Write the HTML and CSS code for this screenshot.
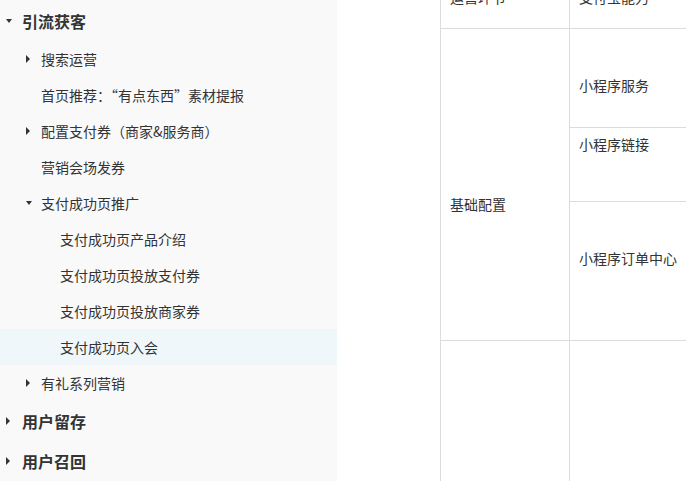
FILE: index.html
```html
<!DOCTYPE html>
<html lang="zh-CN">

<head>
    <meta charset="UTF-8">
    <meta name="viewport" content="width=device-width, initial-scale=1.0">
    <title>支付成功页入会</title>
    <link rel="stylesheet" href="styles.css">
</head>

<body>

    <div class="layout">
        <nav class="sidebar">
            <ul class="tree">
                <li>
                    <div class="row lvl1"><span class="caret down"></span><span>引流获客</span></div>
                    <ul>
                        <li><div class="row lvl2"><span class="caret right"></span><span>搜索运营</span></div></li>
                        <li><div class="row lvl2"><span class="caret"></span><span>首页推荐：“有点东西”素材提报</span></div></li>
                        <li><div class="row lvl2"><span class="caret right"></span><span>配置支付券（商家&amp;服务商）</span></div></li>
                        <li><div class="row lvl2"><span class="caret"></span><span>营销会场发券</span></div></li>
                        <li>
                            <div class="row lvl2"><span class="caret down"></span><span>支付成功页推广</span></div>
                            <ul>
                                <li><div class="row lvl3">支付成功页产品介绍</div></li>
                                <li><div class="row lvl3">支付成功页投放支付券</div></li>
                                <li><div class="row lvl3">支付成功页投放商家券</div></li>
                                <li><div class="row lvl3 active">支付成功页入会</div></li>
                            </ul>
                        </li>
                        <li><div class="row lvl2"><span class="caret right"></span><span>有礼系列营销</span></div></li>
                    </ul>
                </li>
                <li><div class="row lvl1"><span class="caret right"></span><span>用户留存</span></div></li>
                <li><div class="row lvl1"><span class="caret right"></span><span>用户召回</span></div></li>
            </ul>
        </nav>

        <main class="content">
            <table class="ability">
                <colgroup>
                    <col class="col-step">
                    <col class="col-ability">
                </colgroup>
                <thead>
                    <tr class="head-row">
                        <th>运营环节</th>
                        <th>支付宝能力</th>
                    </tr>
                </thead>
                <tbody>
                    <tr class="r1">
                        <td rowspan="3" class="step">基础配置</td>
                        <td class="pad-mid">小程序服务</td>
                    </tr>
                    <tr class="r2">
                        <td class="pad-top">小程序链接</td>
                    </tr>
                    <tr class="r3">
                        <td class="pad-mid">小程序订单中心</td>
                    </tr>
                    <tr class="r4">
                        <td></td>
                        <td></td>
                    </tr>
                </tbody>
            </table>
        </main>
    </div>

</body>

</html>
```

FILE: styles.css
```css
* {
    margin: 0;
    padding: 0;
    box-sizing: border-box;
}

body {
    font-family: "Noto Sans CJK SC", "Noto Sans", sans-serif;
    color: #333;
    background: #fff;
    overflow: hidden;
}

.layout {
    display: flex;
    height: 481px;
}

/* sidebar */

.sidebar {
    width: 337px;
    flex-shrink: 0;
    background: #f9f9fa;
    overflow: hidden;
    padding-top: 1px;
}

.tree,
.tree ul {
    list-style: none;
}

.row {
    display: flex;
    align-items: center;
    height: 36px;
    font-size: 14px;
    white-space: nowrap;
}

.lvl1 {
    height: 40px;
    padding-left: 6px;
    font-size: 16px;
    font-weight: bold;
    color: #333;
}

.lvl1 .caret {
    width: 16px;
}

.lvl2 {
    padding-left: 26px;
}

.lvl2 .caret {
    width: 15px;
}

.lvl3 {
    padding-left: 60px;
}

.active {
    background: #eff7fb;
}

.caret {
    display: flex;
    align-items: center;
    height: 100%;
}

.caret.down::before {
    content: "";
    border-left: 3.5px solid transparent;
    border-right: 3.5px solid transparent;
    border-top: 4px solid #333;
}

.caret.right::before {
    content: "";
    border-top: 4px solid transparent;
    border-bottom: 4px solid transparent;
    border-left: 4px solid #333;
}

/* table */

.content {
    flex: 1;
    overflow: hidden;
    padding-left: 103px;
}

.ability {
    border-collapse: collapse;
    table-layout: fixed;
    width: 429px;
    margin-top: -40px;
    font-size: 14px;
    color: #333;
}

.col-step {
    width: 129px;
}

.col-ability {
    width: 300px;
}

.ability th,
.ability td {
    border: 1px solid #dcdcdc;
    text-align: left;
    vertical-align: top;
    font-weight: normal;
    line-height: 21px;
    padding: 0 9px;
}

.head-row th {
    height: 68px;
    padding-top: 26px;
}

.r1 td {
    height: 99px;
}

.r2 td {
    height: 74px;
}

.r3 td {
    height: 139px;
}

.r4 td {
    height: 160px;
}

.step {
    padding-top: 165px !important;
}

.pad-mid {
    padding-top: 46px !important;
}

.pad-top {
    padding-top: 6px !important;
}
```
